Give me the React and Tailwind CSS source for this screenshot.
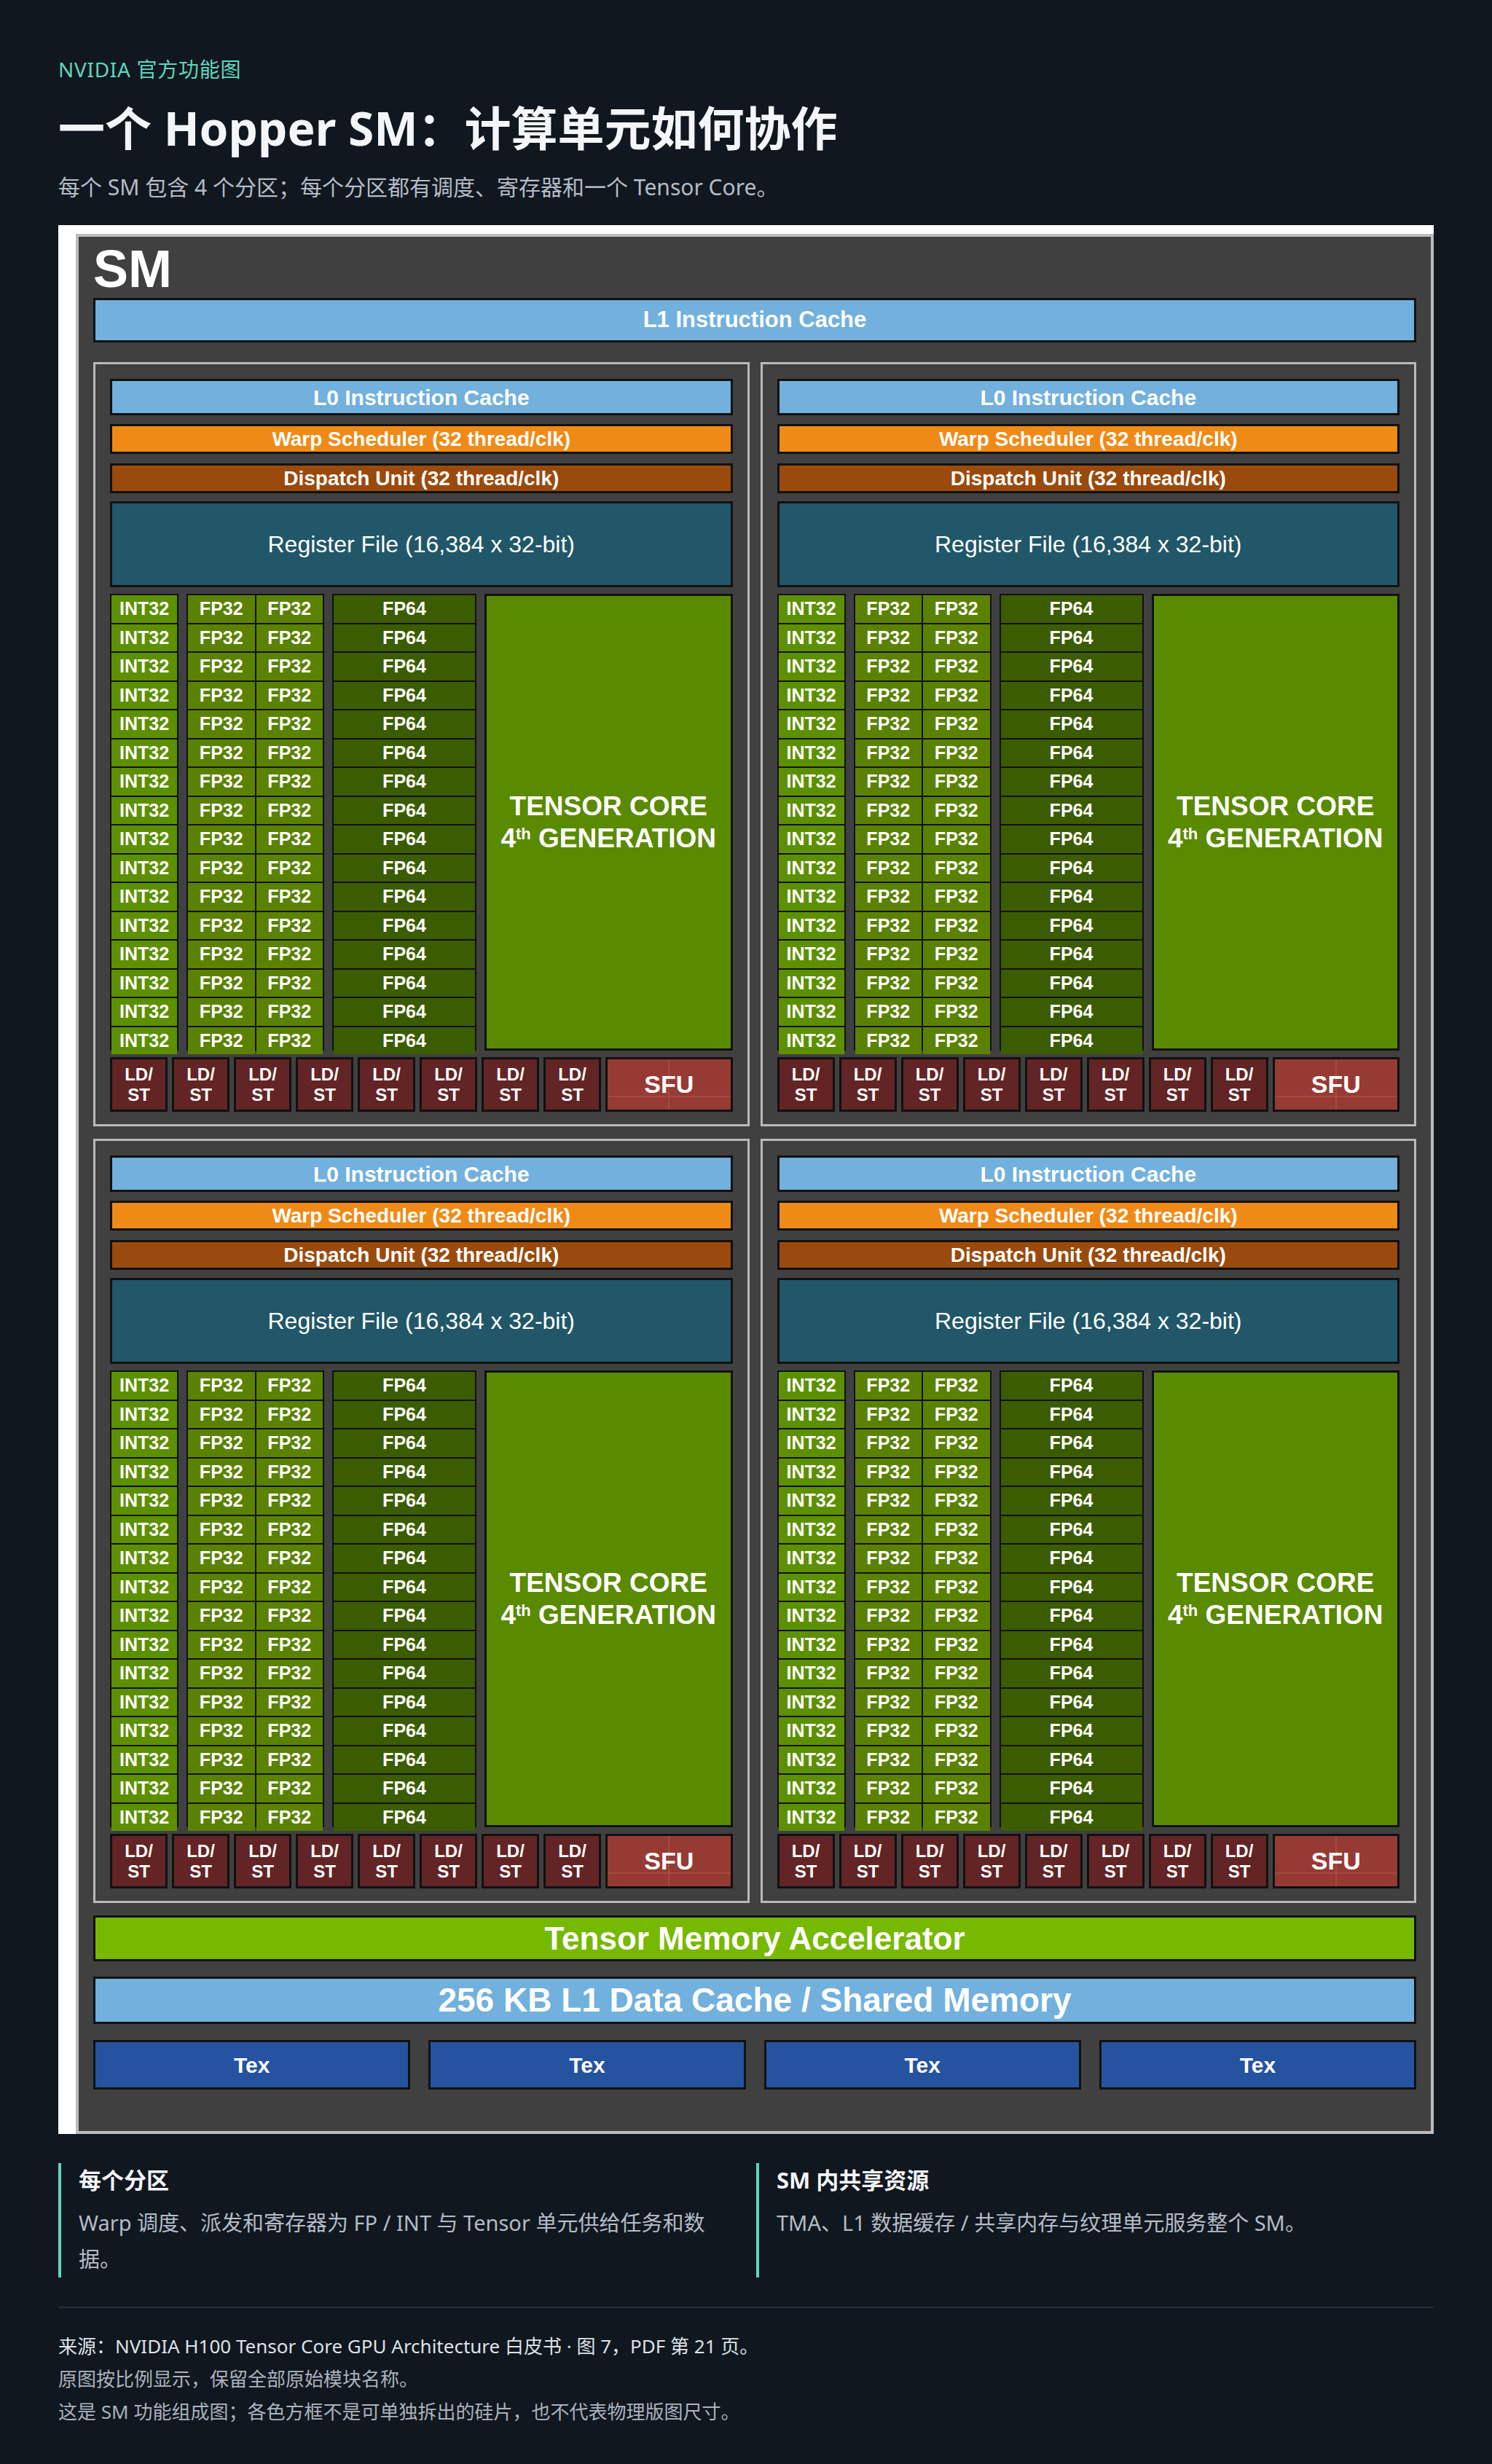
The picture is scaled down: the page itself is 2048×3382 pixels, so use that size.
const FONT = { fontFamily: '"Liberation Sans", Arial, sans-serif' }
const CJK = { fontFamily: '"Noto Sans", "Noto Sans CJK SC", sans-serif' }
const ROWS = Array.from({ length: 16 })
const LDST = Array.from({ length: 8 })

function Bar({ className, children }) {
  return (
    <div className={`flex items-center justify-center border-[3px] border-[#111] font-bold text-white ${className}`}>
      {children}
    </div>
  )
}

function Partition() {
  return (
    <div className="flex flex-col border-[3px] border-[#b9b9b9] bg-[#404040] px-[20px] pt-[20px] pb-[17px]">
      <Bar className="h-[50px] bg-[#72b0dd] text-[30px]">L0 Instruction Cache</Bar>
      <Bar className="mt-[12px] h-[41px] bg-[#f08a16] text-[28px]">Warp Scheduler (32 thread/clk)</Bar>
      <Bar className="mt-[13px] h-[41px] bg-[#9a4a0c] text-[28px]">Dispatch Unit (32 thread/clk)</Bar>
      <div className="mt-[11px] flex h-[118px] items-center justify-center border-[3px] border-[#111] bg-[#215768] text-[32px] text-white">
        Register File (16,384 x 32-bit)
      </div>
      <div className="mt-[9px] flex h-[627px] gap-[11px]">
        <div className="flex w-[94px] flex-col gap-[2px] bg-[#111] p-[2px]">
          {ROWS.map((_, i) => (
            <div key={i} className="flex flex-1 items-center justify-center bg-[#5d9000] text-[25px] font-bold text-white">INT32</div>
          ))}
        </div>
        <div className="grid w-[189px] grid-cols-2 gap-[2px] bg-[#111] p-[2px]">
          {ROWS.flatMap((_, i) => [0, 1].map(j => (
            <div key={`${i}-${j}`} className="flex items-center justify-center bg-[#5a8200] text-[25px] font-bold text-white">FP32</div>
          )))}
        </div>
        <div className="flex w-[198px] flex-col gap-[2px] bg-[#111] p-[2px]">
          {ROWS.map((_, i) => (
            <div key={i} className="flex flex-1 items-center justify-center bg-[#3b5c00] text-[25px] font-bold text-white">FP64</div>
          ))}
        </div>
        <div className="flex flex-1 flex-col items-center justify-center border-[3px] border-[#111] bg-[#5a8a00] text-[37px] font-bold leading-[44px] text-white">
          <span>TENSOR CORE</span>
          <span>4<sup className="text-[22px]">th</sup> GENERATION</span>
        </div>
      </div>
      <div className="mt-[9px] flex h-[75px] gap-[6px]">
        {LDST.map((_, i) => (
          <div key={i} className="flex w-[79px] flex-col items-center justify-center border-[3px] border-[#111] bg-[#622424] text-[24px] font-bold leading-[28px] text-white">
            <span>LD/</span>
            <span>ST</span>
          </div>
        ))}
        <div className="relative flex-1 border-[3px] border-[#111] bg-[#a54a42]">
          <div className="grid h-full grid-cols-2 grid-rows-[3fr_1fr] gap-[2px]">
            <div className="bg-[#963a34]" />
            <div className="bg-[#963a34]" />
            <div className="bg-[#963a34]" />
            <div className="bg-[#963a34]" />
          </div>
          <div className="absolute inset-0 flex items-center justify-center text-[34px] font-bold text-white">SFU</div>
        </div>
      </div>
    </div>
  )
}

export default function App() {
  return (
    <div className="min-h-[3382px] bg-[#11171e] px-[80px] pt-[74px]" style={CJK}>
      <p className="text-[28px] tracking-wide text-[#5fd6bf]">NVIDIA 官方功能图</p>
      <h1 className="mt-[20px] text-[64px] font-bold leading-[80px] text-[#f3f5f8]">一个 Hopper SM：计算单元如何协作</h1>
      <p className="mt-[18px] text-[30px] text-[#b4bcc8]">每个 SM 包含 4 个分区；每个分区都有调度、寄存器和一个 Tensor Core。</p>

      <div className="mt-[30px] bg-white pl-[24px] pt-[12px]" style={FONT}>
        <div className="flex flex-col border-[4px] border-[#bcbcbc] bg-[#404040] px-[20px] pb-[57px]">
          <div className="h-[84px] pt-[6px] text-[72px] font-bold leading-[76px] text-white">SM</div>
          <Bar className="h-[61px] bg-[#72b0dd] text-[31px]">L1 Instruction Cache</Bar>
          <div className="mt-[27px] grid grid-cols-2 gap-x-[15px] gap-y-[17px]">
            <Partition />
            <Partition />
            <Partition />
            <Partition />
          </div>
          <Bar className="mt-[17px] h-[63px] bg-[#76b900] text-[44px]">Tensor Memory Accelerator</Bar>
          <Bar className="mt-[21px] h-[65px] bg-[#72b0dd] text-[46px]">256 KB L1 Data Cache / Shared Memory</Bar>
          <div className="mt-[22px] grid grid-cols-4 gap-[25px]">
            {[0, 1, 2, 3].map(i => (
              <Bar key={i} className="h-[68px] bg-[#2553a0] text-[30px]">Tex</Bar>
            ))}
          </div>
        </div>
      </div>

      <div className="mt-[40px] grid grid-cols-2 gap-[28px]">
        <div className="border-l-[4px] border-[#5fd6bf] pl-[24px]">
          <h3 className="text-[31px] font-bold text-[#f3f5f8]">每个分区</h3>
          <p className="mt-[10px] text-[29px] leading-[50px] text-[#b4bcc8]">Warp 调度、派发和寄存器为 FP / INT 与 Tensor 单元供给任务和数据。</p>
        </div>
        <div className="border-l-[4px] border-[#5fd6bf] pl-[24px]">
          <h3 className="text-[31px] font-bold text-[#f3f5f8]">SM 内共享资源</h3>
          <p className="mt-[10px] text-[29px] leading-[50px] text-[#b4bcc8]">TMA、L1 数据缓存 / 共享内存与纹理单元服务整个 SM。</p>
        </div>
      </div>

      <div className="mt-[40px] border-t-2 border-[#27303a] pt-[30px] text-[26px] leading-[45px]">
        <p className="text-[#dde2e8]">来源：NVIDIA H100 Tensor Core GPU Architecture 白皮书 · 图 7，PDF 第 21 页。</p>
        <p className="text-[#aab3bf]">原图按比例显示，保留全部原始模块名称。</p>
        <p className="text-[#aab3bf]">这是 SM 功能组成图；各色方框不是可单独拆出的硅片，也不代表物理版图尺寸。</p>
      </div>
    </div>
  )
}
